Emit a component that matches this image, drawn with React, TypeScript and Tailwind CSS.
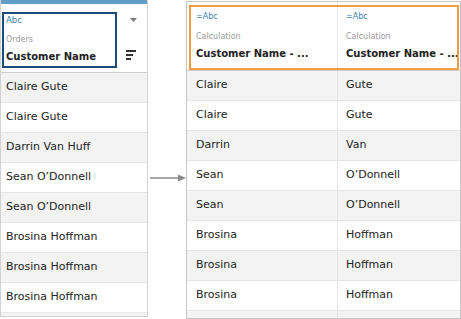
import React from "react";

const font = { fontFamily: '"DejaVu Sans", Verdana, sans-serif' };

const names: [string, string][] = [
  ["Claire", "Gute"],
  ["Claire", "Gute"],
  ["Darrin", "Van"],
  ["Sean", "O\u2019Donnell"],
  ["Sean", "O\u2019Donnell"],
  ["Brosina", "Hoffman"],
  ["Brosina", "Hoffman"],
  ["Brosina", "Hoffman"],
];
const fullNames = [
  "Claire Gute",
  "Claire Gute",
  "Darrin Van Huff",
  "Sean O\u2019Donnell",
  "Sean O\u2019Donnell",
  "Brosina Hoffman",
  "Brosina Hoffman",
  "Brosina Hoffman",
];

function LeftPanel() {
  return (
    <div className="flex h-[317px] w-[148px] shrink-0 flex-col border-x border-b border-[#d2d2d2] bg-white">
      <div className="h-[4px] bg-[#5f9dc6]" />
      <div className="flex h-[68px] pl-[1px]">
        <div className="mt-[8px] flex h-[56px] w-[115px] flex-col border-2 border-[#1e4a78] pl-[2px]">
          <div className="text-[8.5px] leading-[12px] text-[#3d7fae]">Abc</div>
          <div className="mt-[8px] text-[8px] leading-[12px] text-[#9a9a9a]">Orders</div>
          <div className="mt-[3px] text-[10px] font-bold leading-[15px] text-[#222]">Customer Name</div>
        </div>
        <div className="flex flex-col">
          <svg className="ml-[13px] mt-[14px]" width="8" height="5" viewBox="0 0 8 5">
            <polygon points="0,0 7,0 3.5,4" fill="#7a7a7a" />
          </svg>
          <svg className="ml-[9px] mt-[27px]" width="11" height="10" viewBox="0 0 11 10">
            <rect x="0" y="0" width="10" height="2" fill="#333" />
            <rect x="0" y="4" width="7" height="2" fill="#333" />
            <rect x="0" y="8" width="5" height="2" fill="#333" />
          </svg>
        </div>
      </div>
      <div className="h-px bg-[#cfcfcf]" />
      {fullNames.map((n, i) => (
        <div
          key={i}
          className={`flex h-[30px] items-center border-b border-[#e6e6e6] pl-[5px] text-[11px] text-[#222] ${
            i % 2 === 0 ? "bg-[#f3f3f3]" : "bg-white"
          }`}
        >
          {n}
        </div>
      ))}
      <div className="flex-1 bg-[#f3f3f3]" />
    </div>
  );
}

function Arrow() {
  return (
    <div className="w-[38px] shrink-0 pt-[173px]">
      <svg width="38" height="10" viewBox="0 0 38 10">
        <line x1="2" y1="5" x2="32" y2="5" stroke="#8a8a8a" strokeWidth="1.5" />
        <polygon points="30,1.5 38,5 30,8.5" fill="#8a8a8a" />
      </svg>
    </div>
  );
}

function RightPanel() {
  return (
    <div className="mt-[1px] flex h-[318px] w-[275px] shrink-0 flex-col border border-[#c6c6c6] bg-white">
      <div className="relative flex h-[68px]">
        <div className="flex w-[151px] flex-col border-r border-[#e6e6e6] pl-[9px] pt-[9px]">
          <div className="text-[8px] leading-[12px] text-[#3d7fae]">=Abc</div>
          <div className="mt-[8px] text-[8px] leading-[12px] text-[#9a9a9a]">Calculation</div>
          <div className="mt-[3px] whitespace-nowrap text-[10px] font-bold leading-[15px] text-[#222]">
            Customer Name - ...
          </div>
        </div>
        <div className="flex flex-1 flex-col pl-[8px] pt-[9px]">
          <div className="text-[8px] leading-[12px] text-[#3d7fae]">=Abc</div>
          <div className="mt-[8px] text-[8px] leading-[12px] text-[#9a9a9a]">Calculation</div>
          <div className="mt-[3px] whitespace-nowrap text-[10px] font-bold leading-[15px] text-[#222]">
            Customer Name - ...
          </div>
        </div>
        <div className="pointer-events-none absolute left-[2px] right-[1px] top-[3px] h-[65px] border-2 border-[#f39a44]" />
      </div>
      <div className="h-px bg-[#cfcfcf]" />
      {names.map(([a, b], i) => (
        <div
          key={i}
          className={`flex h-[30px] border-b border-[#e6e6e6] text-[11px] text-[#222] ${
            i % 2 === 0 ? "bg-[#f3f3f3]" : "bg-white"
          }`}
        >
          <div className="flex w-[151px] items-center border-r border-[#e6e6e6] pl-[9px]">{a}</div>
          <div className="flex flex-1 items-center pl-[8px]">{b}</div>
        </div>
      ))}
      <div className="flex flex-1 bg-[#f3f3f3]">
        <div className="w-[151px] border-r border-[#e6e6e6]" />
      </div>
    </div>
  );
}

export default function App() {
  return (
    <div className="flex h-[319px] w-[461px] items-start bg-white" style={font}>
      <LeftPanel />
      <Arrow />
      <RightPanel />
    </div>
  );
}
